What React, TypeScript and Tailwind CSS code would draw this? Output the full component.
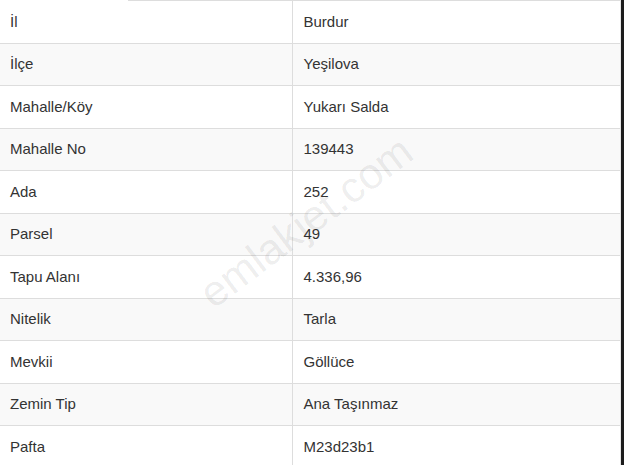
import React from "react";

const rows: [string, string][] = [
  ["İl", "Burdur"],
  ["İlçe", "Yeşilova"],
  ["Mahalle/Köy", "Yukarı Salda"],
  ["Mahalle No", "139443"],
  ["Ada", "252"],
  ["Parsel", "49"],
  ["Tapu Alanı", "4.336,96"],
  ["Nitelik", "Tarla"],
  ["Mevkii", "Göllüce"],
  ["Zemin Tip", "Ana Taşınmaz"],
  ["Pafta", "M23d23b1"],
];

const App = () => {
  return (
    <div
      className="w-[624px] h-[465px] overflow-hidden bg-[#1c1c1c] flex"
      style={{ fontFamily: '"Liberation Sans", Arial, sans-serif' }}
    >
      <div className="relative w-[621px] h-full bg-white border-r border-[#e4e4e4] overflow-hidden">
        <table className="w-full border-collapse text-[15px] text-[#333]">
          <tbody>
            {rows.map(([label, value], i) => (
              <tr
                key={label}
                className={`h-[42.5px] border-t border-[#dddddd] ${i % 2 === 1 ? "bg-[#f9f9f9]" : "bg-white"}`}
              >
                <td className="w-[292px] pl-[10px] align-middle leading-5">{label}</td>
                <td className="border-l border-[#dddddd] pl-[11px] align-middle leading-5">{value}</td>
              </tr>
            ))}
          </tbody>
        </table>

        {/* watermark */}
        <div className="pointer-events-none absolute left-[306px] top-[222px] -translate-x-1/2 -translate-y-1/2 -rotate-[37deg] text-[43px] leading-none text-[#000]/[0.08] whitespace-nowrap">
          emlakjet.com
        </div>

        {/* top-left cover */}
        <div className="absolute left-0 top-0 w-[128px] h-[2px] bg-white" />
      </div>
    </div>
  );
};

export default App;
